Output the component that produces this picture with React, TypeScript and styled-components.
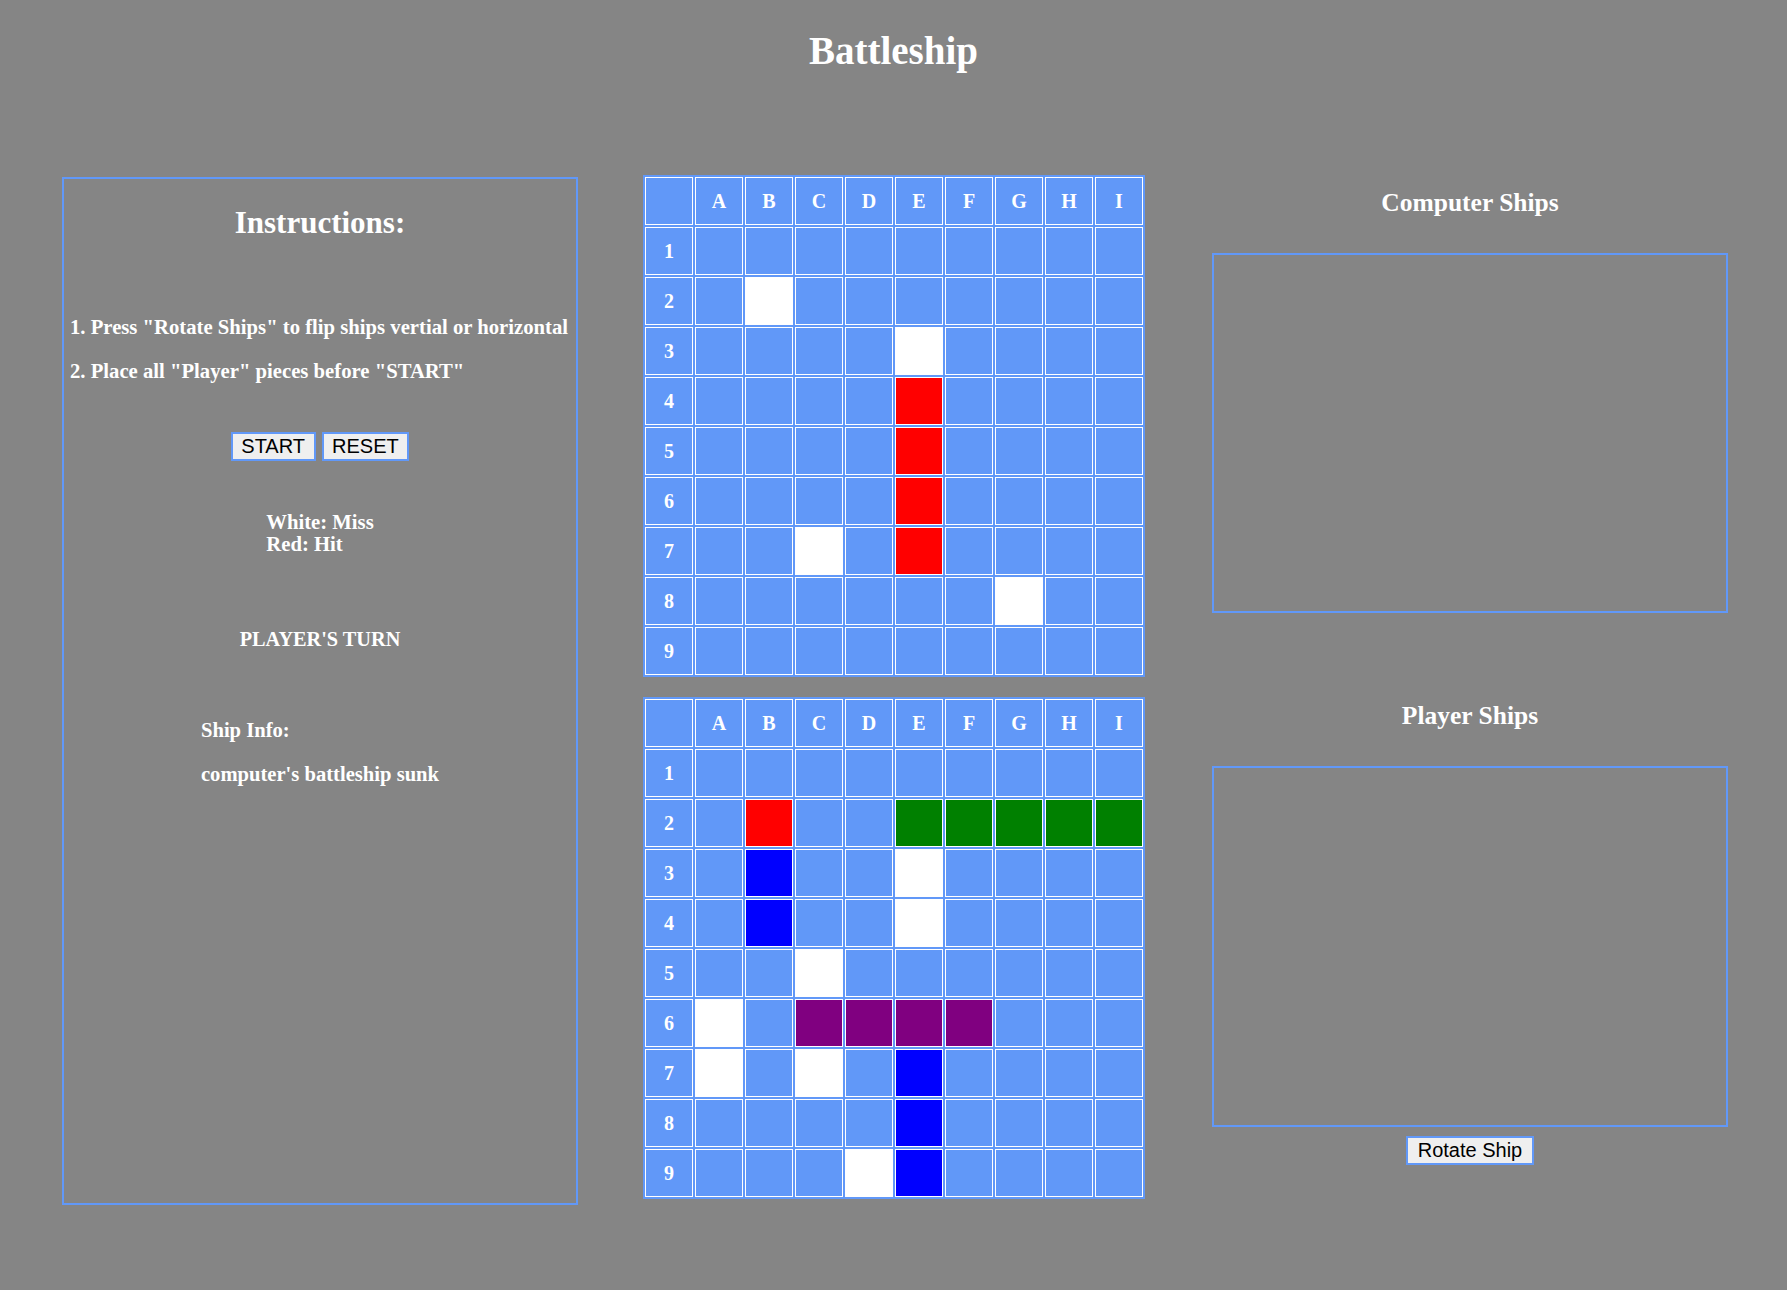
import React from "react";
import styled, { createGlobalStyle } from "styled-components";

const GlobalStyle = createGlobalStyle`
  html, body {
    margin: 0;
    padding: 0;
    background: #858585;
  }
  body {
    font-family: "Liberation Serif", "Times New Roman", serif;
    color: #ffffff;
  }
`;

const BLUE = "#6198f8";

type CellKind = "water" | "miss" | "hit" | "green" | "blue" | "purple";

const cellColors: Record<CellKind, string> = {
  water: BLUE,
  miss: "#ffffff",
  hit: "#ff0000",
  green: "#008000",
  blue: "#0000ff",
  purple: "#800080",
};

const Page = styled.div`
  width: 1787px;
  min-height: 1290px;
  background: #858585;
`;

const Title = styled.h1`
  margin: 0;
  padding-top: 28px;
  font-size: 39px;
  line-height: 46px;
  font-weight: bold;
  text-align: center;
`;

const MainRow = styled.div`
  display: flex;
  align-items: flex-start;
  padding-left: 62px;
  margin-top: 101px;
`;

const InfoPanel = styled.section`
  box-sizing: border-box;
  width: 516px;
  height: 1028px;
  margin-top: 2px;
  padding: 0 6px;
  border: 2px solid ${BLUE};
  display: flex;
  flex-direction: column;
  font-weight: bold;
`;

const PanelTitle = styled.h2`
  margin: 26px 0 0;
  font-size: 31px;
  line-height: 36px;
  text-align: center;
`;

const Steps = styled.div`
  margin-top: 74px;
  display: flex;
  flex-direction: column;
  gap: 20px;
`;

const Step = styled.p`
  margin: 0;
  font-size: 20.7px;
  line-height: 24px;
  white-space: nowrap;
`;

const ButtonRow = styled.div`
  margin-top: 49px;
  display: flex;
  justify-content: center;
  gap: 6px;
`;

const GameButton = styled.button<{ $top?: number; $padX?: number }>`
  font-family: "Liberation Sans", Arial, sans-serif;
  font-size: 20px;
  line-height: 23px;
  padding: 1px ${(p) => p.$padX ?? 8}px;
  margin-top: ${(p) => p.$top ?? 0}px;
  border: 2px solid ${BLUE};
  border-radius: 0;
  background: #efefef;
  color: #000000;
  cursor: pointer;
`;

const CenteredBlock = styled.div<{ $top: number; $lh: number; $gap?: number; $size: number }>`
  align-self: center;
  margin-top: ${(p) => p.$top}px;
  display: flex;
  flex-direction: column;
  gap: ${(p) => p.$gap ?? 0}px;
  font-size: ${(p) => p.$size}px;
  line-height: ${(p) => p.$lh}px;
  text-align: left;
  white-space: nowrap;
`;

const Line = styled.span``;

const BoardColumn = styled.div`
  margin-left: 65px;
  display: flex;
  flex-direction: column;
  gap: 20px;
`;

const Board = styled.div`
  display: grid;
  grid-template-columns: repeat(10, 48px);
  grid-auto-rows: 48px;
  gap: 2px;
  padding: 2px;
  background: ${BLUE};
`;

const Cell = styled.div<{ $kind: CellKind }>`
  box-sizing: border-box;
  border: 1px solid #ffffff;
  background: ${(p) => cellColors[p.$kind]};
  display: flex;
  align-items: center;
  justify-content: center;
  font-size: 20px;
  font-weight: bold;
  color: #ffffff;
`;

const SideColumn = styled.div`
  margin-left: 67px;
  width: 516px;
  display: flex;
  flex-direction: column;
  align-items: center;
`;

const SideHeading = styled.h3<{ $top: number }>`
  margin: ${(p) => p.$top}px 0 0;
  font-size: 25.5px;
  line-height: 30px;
  font-weight: bold;
`;

const ShipBox = styled.div<{ $h: number }>`
  box-sizing: border-box;
  width: 100%;
  height: ${(p) => p.$h}px;
  margin-top: 35px;
  border: 2px solid ${BLUE};
`;

const COLS = ["A", "B", "C", "D", "E", "F", "G", "H", "I"];

const computerMarks: Record<string, CellKind> = {
  B2: "miss",
  E3: "miss",
  E4: "hit",
  E5: "hit",
  E6: "hit",
  E7: "hit",
  C7: "miss",
  G8: "miss",
};

const playerMarks: Record<string, CellKind> = {
  B2: "hit",
  E2: "green",
  F2: "green",
  G2: "green",
  H2: "green",
  I2: "green",
  B3: "blue",
  E3: "miss",
  B4: "blue",
  E4: "miss",
  C5: "miss",
  A6: "miss",
  C6: "purple",
  D6: "purple",
  E6: "purple",
  F6: "purple",
  A7: "miss",
  C7: "miss",
  E7: "blue",
  E8: "blue",
  D9: "miss",
  E9: "blue",
};

function GameBoard({ marks }: { marks: Record<string, CellKind> }) {
  const cells: React.ReactNode[] = [];
  cells.push(<Cell key="corner" $kind="water" />);
  COLS.forEach((c) =>
    cells.push(
      <Cell key={`h-${c}`} $kind="water">
        {c}
      </Cell>
    )
  );
  for (let r = 1; r <= 9; r++) {
    cells.push(
      <Cell key={`r-${r}`} $kind="water">
        {r}
      </Cell>
    );
    COLS.forEach((c) => {
      const id = `${c}${r}`;
      cells.push(<Cell key={id} $kind={marks[id] ?? "water"} />);
    });
  }
  return <Board>{cells}</Board>;
}

export default function App() {
  return (
    <Page>
      <GlobalStyle />
      <Title>Battleship</Title>
      <MainRow>
        <InfoPanel>
          <PanelTitle>Instructions:</PanelTitle>
          <Steps>
            <Step>1. Press "Rotate Ships" to flip ships vertial or horizontal</Step>
            <Step>2. Place all "Player" pieces before "START"</Step>
          </Steps>
          <ButtonRow>
            <GameButton $padX={8.5}>START</GameButton>
            <GameButton $padX={8.5}>RESET</GameButton>
          </ButtonRow>
          <CenteredBlock $top={50} $lh={22.4} $size={20.7}>
            <Line>White: Miss</Line>
            <Line>Red: Hit</Line>
          </CenteredBlock>
          <CenteredBlock $top={71} $lh={24} $size={20.3}>
            <Line>PLAYER'S TURN</Line>
          </CenteredBlock>
          <CenteredBlock $top={67} $lh={24} $gap={20.5} $size={20.6}>
            <Line>Ship Info:</Line>
            <Line>computer's battleship sunk</Line>
          </CenteredBlock>
        </InfoPanel>
        <BoardColumn>
          <GameBoard marks={computerMarks} />
          <GameBoard marks={playerMarks} />
        </BoardColumn>
        <SideColumn>
          <SideHeading $top={13}>Computer Ships</SideHeading>
          <ShipBox $h={360} />
          <SideHeading $top={88}>Player Ships</SideHeading>
          <ShipBox $h={361} />
          <GameButton $top={9} $padX={9.5}>
            Rotate Ship
          </GameButton>
        </SideColumn>
      </MainRow>
    </Page>
  );
}
